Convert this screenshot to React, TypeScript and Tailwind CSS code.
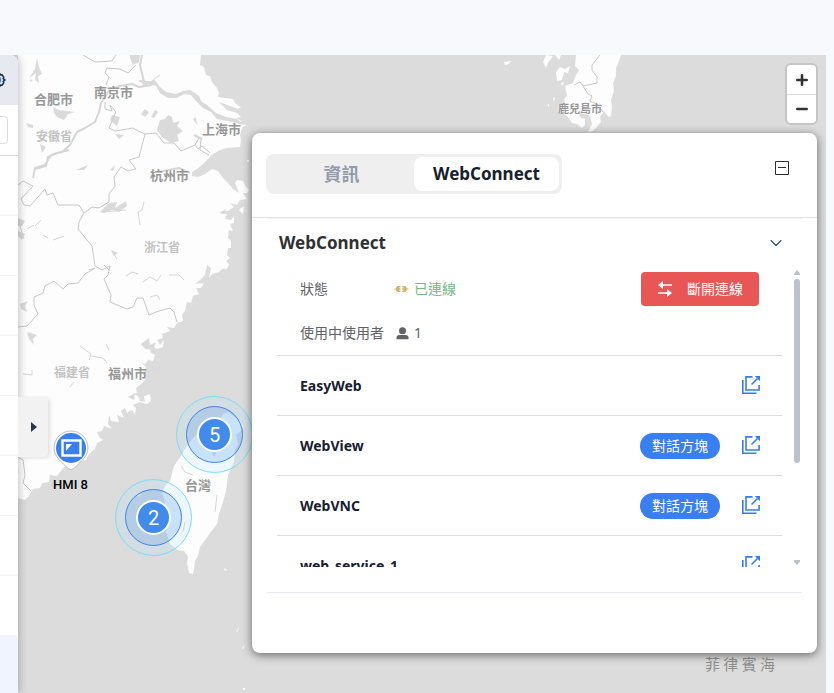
import React from 'react';
import { ChevronDown } from 'lucide-react';

interface Service {
  id: string;
  name: string;
  dialog: boolean;
}

interface Place {
  name: string;
  className: string;
}

const services: Service[] = [
  { id: 'easyweb', name: 'EasyWeb', dialog: false },
  { id: 'webview', name: 'WebView', dialog: true },
  { id: 'webvnc', name: 'WebVNC', dialog: true },
  { id: 'service-1', name: 'web_service_1', dialog: false },
];

const cityStyle = 'text-[13px] font-bold text-[#989898]';
const provinceStyle = 'text-[12px] font-bold text-[#c2c2c2]';

const places: Place[] = [
  { name: '合肥市', className: `left-[16px] top-[34px] ${cityStyle}` },
  { name: '南京市', className: `left-[76px] top-[27px] ${cityStyle}` },
  { name: '上海市', className: `left-[184px] top-[64px] ${cityStyle}` },
  { name: '杭州市', className: `left-[132px] top-[110px] ${cityStyle}` },
  { name: '福州市', className: `left-[90px] top-[308px] ${cityStyle}` },
  { name: '安徽省', className: `left-[18px] top-[71px] ${provinceStyle}` },
  { name: '浙江省', className: `left-[126px] top-[182px] ${provinceStyle}` },
  { name: '福建省', className: `left-[36px] top-[307px] ${provinceStyle}` },
  { name: '台灣', className: `left-[167px] top-[420px] ${cityStyle}` },
  { name: '鹿兒島市', className: 'left-[540px] top-[43px] text-[11px] font-bold text-[#989898]' },
];

const BaseMap: React.FC = () => (
  <svg
    className="absolute inset-0 h-full w-full"
    viewBox="18 55 808 638"
    preserveAspectRatio="xMinYMin slice"
    aria-hidden="true"
  >
    {/* land */}
    <g fill="#fdfdfe">
      <path d="M18 55H201L200 65L204 67L206 75L210 76L212 82L217 88L219 93L218 97L226 98L233 99L236 104L241 107L238 109L230 106L219 102L227 110L237 113L241 117L236 118L242 121L240 123L246 125L242 128L240 135L241 140L240 147L227 148L220 150L213 154L207 160L202 165L197 169L192 172L192 176L198 177L205 174L212 169L218 171L223 178L229 184L233 189L239 193L235 183L237 180L243 181L246 187L249 190L247 193L243 193L247 199L240 200L237 205L230 203L234 207L228 211L222 211L221 214L227 214L225 219L231 220L234 216L234 223L230 224L233 231L229 230L228 238L231 241L231 248L228 248L227 255L230 258L226 261L229 264L227 269L222 269L219 272L212 274L209 278L211 268L207 265L205 275L200 280L195 284L204 283L201 288L196 288L199 294L193 296L191 303L187 302L185 311L182 315L183 321L177 323L174 328L167 327L170 331L162 334L163 338L157 340L160 345L164 340L163 347L157 349L152 346L150 352L155 355L153 361L148 360L145 364L141 362L146 367L143 373L145 380L140 385L136 388L137 393L133 394L138 396L140 401L145 402L144 396L150 394L151 401L147 404L140 402L133 405L136 408L135 415L132 410L127 413L125 408L121 411L124 418L117 415L119 422L111 421L109 415L108 424L112 429L104 426L102 431L97 432L100 438L103 440L97 443L95 449L89 454L86 460L79 461L74 466L64 467L57 476L50 475L49 482L42 483L40 488L33 489L29 496L25 500L18 498Z" />
      <path d="M205 426L214 418L220 419L223 414L228 412L233 416L240 421L243 426L241 431L236 435L238 444L235 450L234 462L228 475L226 491L223 502L219 514L217 524L210 533L206 539L200 547L198 556L195 561L194 570L193 574L189 573L187 563L188 557L184 551L178 550L170 544L166 532L167 523L164 513L165 502L162 493L165 486L170 481L174 466L181 456L188 444L196 435Z" />
      <path d="M576 55L575 66L579 70L576 75L573 83L565 86L567 96L564 99L566 108L563 113L568 117L572 123L577 124L582 128L585 125L585 119L580 117L578 112L585 114L590 116L592 124L588 132L593 131L601 122L600 117L604 111L609 117L611 116L612 107L611 100L614 91L613 83L616 76L616 68L619 61L621 55Z" />
      <path d="M556 72L560 67L565 69L570 66L568 73L564 72L562 80L557 81ZM546 55L553 56L548 63L546 68L543 62ZM555 55L561 55L559 60ZM504 62L511 61L509 64L505 65ZM561 83L564 82L562 86ZM553 98L555 97L554 102ZM547 105L549 104L549 107ZM241 208L244 207L243 214L239 210ZM224 234L227 231L226 235ZM236 632L239 627L238 631ZM242 648L245 645L243 649ZM224 568L227 570L225 571ZM243 688H245V690H243ZM137 495L142 494L139 497ZM247 160H249V162H247ZM240 187L244 186L246 189L242 190Z" />
    </g>

    {/* lakes and rivers */}
    <g fill="#dadada">
      <path d="M142 82L148 83L154 79L160 87L166 92L176 94L183 91L190 90L199 96L201 101L208 106L216 113L226 117L237 119L245 125L239 124L227 121L217 119L211 112L203 108L197 102L191 95L184 94L177 98L168 98L160 93L156 86L149 84L143 86Z" />
      <path d="M160 120L165 119L168 115L172 117L173 123L180 121L177 126L183 131L177 135L179 141L171 143L162 137L157 130Z" />
      <path d="M53 107L59 110L66 111L75 112L68 114L64 120L57 117L54 113ZM37 58L39 67L42 74L38 76L39 83L35 80L36 73L29 78L35 69ZM30 79L33 80L30 82ZM145 109L149 112L145 117L141 114ZM155 110L158 112L154 118L151 117ZM130 58V55H140L139 62L133 65ZM112 115L120 117L117 126L110 120ZM115 134L124 135L119 139ZM26 123L33 125L33 128L28 127ZM40 144L46 147L42 153ZM193 119L196 117L197 125ZM18 218L25 221L22 226L18 226ZM18 231L25 234L22 240L18 236ZM100 212L109 203L117 202L115 208L126 201L127 206L119 212L112 210L103 213ZM76 170L88 165L84 170ZM110 170L115 165L113 171ZM111 250L118 253L114 256ZM20 304L28 301L25 306L27 312L21 309ZM27 332L37 335L33 339L34 345L29 339ZM151 365L160 367L158 373L151 371ZM212 454L218 442L215 457Z" />
      <path d="M141 344L149 338L150 345L156 342L153 350L145 349ZM128 397L135 393L134 400ZM219 213L226 209L224 213Z" />
    </g>
    <g fill="none" stroke="#d6d6d6" strokeWidth="2" strokeLinejoin="round">
      <path d="M142 55L140 65L144 82M152 85L139 87L132 84L120 86L109 90L105 97L101 103L99 112L95 122L85 128L77 132L70 145L62 152L51 155L45 165L35 168L33 178M69 150L57 153L48 157L46 166L35 169" />
      <path d="M139 81L154 83M194 135L202 139M158 172L179 168L190 173" />
      <path
        d="M144 202L142 210L138 212L140 225M126 210L103 212M34 225L27 229M35 226L41 220M19 222L24 239M43 235L48 238M53 240L64 236M112 251L117 259M126 276L132 272L138 274M143 282L150 277L157 281L161 275M169 275L179 275L184 280M150 297L157 295L160 300M80 346L91 354L89 360M91 356L103 358L107 363M106 344L109 350M23 374L32 375L32 370M70 387L74 382M181 466L185 472L193 475M185 522L183 532M217 495L215 512M154 79L160 75"
        strokeWidth="1"
      />
    </g>

    {/* borders */}
    <g fill="none" stroke="#c8c8c8" strokeWidth="1" strokeLinejoin="round">
      <path d="M83 55L95 62L112 61L116 55M106 85L109 77L105 73L107 68L120 69L128 73L136 65M105 102L105 109L112 111L110 105L116 112L112 121L109 128L115 131L133 128L138 131L145 134L156 133M145 134L139 157L129 160L136 169L128 171L121 167L114 177L115 186L109 194L109 202L99 208L92 207L84 213L79 205L58 205L53 193L47 195L45 189L38 197L30 206L24 205L21 199L33 186L23 181L18 185" />
      <path d="M84 213L79 222L78 229L92 246L95 266L102 270L110 266L108 275L104 279L111 295L110 302L127 309L133 307L137 298L143 298L149 315L156 312L170 308L174 312L177 322M95 268L85 274L78 283L68 284L63 289L54 281L45 286L43 293L34 297L34 305L38 314L27 326L18 327M95 268L89 270M104 265L109 270" />
      <path d="M156 133L164 143L174 143L181 151L195 145L198 149L202 146L210 153M195 145L199 138M201 139L200 150L209 155M18 457L23 460L25 475L23 483L31 491" />
      <path d="M600 55L592 65L592 70L597 77L597 83L583 86L580 82L574 85M583 86L588 94L592 96L590 101L598 105L603 112" />
    </g>
  </svg>
);

const GearIcon: React.FC = () => (
  <svg className="h-4 w-4 shrink-0" viewBox="0 0 16 16" fill="none">
    <path
      d="M6.500 1H9.500L10.200 3L12.200 2.800L13.800 5.300L13.200 6.600L15 8L13.200 9.400L13.800 10.700L12.200 13.200L10.200 13L9.500 15H6.500L5.800 13L3.800 13.200L2.200 10.700L2.800 9.400L1 8L2.800 6.600L2.200 5.300L3.800 2.800L5.800 3Z"
      stroke="#1c2638"
      strokeWidth="1.500"
      strokeLinejoin="round"
    />
    <circle cx="8" cy="8" r="2.600" stroke="#2f8fe8" strokeWidth="1.500" />
  </svg>
);

const OpenIcon: React.FC = () => (
  <svg className="h-[18px] w-[18px]" viewBox="0 0 18 18" fill="none" stroke="#347dee" strokeWidth="1.6">
    <path d="M0.800 4V17.200H14.500" />
    <path d="M10.500 0.900H4V14H17.100V9" />
    <path d="M9.500 8.500L15.500 2.500" />
    <path d="M12.800 0H18V5.200Z" fill="#347dee" stroke="none" />
  </svg>
);

const ClusterMarker: React.FC<{ count: number; className: string }> = ({ count, className }) => (
  <button
    className={`absolute flex h-[77px] w-[77px] items-center justify-center rounded-full border border-[#7adcf8] bg-[#afe6ff]/20 ${className}`}
  >
    <span className="flex h-[57px] w-[57px] items-center justify-center rounded-full border border-[#3f84ea] bg-[#3c8cf0]/20">
      <span className="flex h-[35px] w-[35px] items-center justify-center rounded-full border-2 border-white bg-[#418bec] font-['Roboto',sans-serif] text-[20px] leading-5 text-white">
        {count}
      </span>
    </span>
  </button>
);

const HmiMarker: React.FC = () => (
  <button className="absolute left-[32px] top-[374px] flex w-[41px] flex-col items-center">
    <svg className="h-[42px] w-10" viewBox="0 0 40 42">
      <path
        d="M20 2A17 17 0 0 1 37 19C37 28 29 33 23 39.500Q20 42 17 39.500C11 33 3 28 3 19A17 17 0 0 1 20 2Z"
        fill="#fff"
        stroke="#bdbdbd"
        strokeWidth="1"
      />
      <circle cx="20" cy="19" r="15" fill="#387ef4" />
      <path d="M11.500 11.500H29.500V26.500H11.500Z" fill="none" stroke="#fff" strokeWidth="2.400" />
      <path d="M15 15H21L15 22Z" fill="#fff" />
    </svg>
    <span className="mt-[6px] whitespace-nowrap font-['Roboto',sans-serif] text-[13px] font-medium leading-4 text-black">
      HMI 8
    </span>
  </button>
);

const Sidebar: React.FC = () => (
  <aside className="relative z-10 w-[18px] shrink-0 rounded-tr-lg bg-white shadow-[1px_0_8px_rgba(0,0,0,0.25)]">
    <div className="flex h-full flex-col overflow-hidden rounded-tr-lg">
      <div className="flex h-[50px] shrink-0 items-center justify-end bg-[#e6eaf0] pr-3">
        <GearIcon />
      </div>
      <div className="flex h-[51px] shrink-0 items-center justify-end border-b border-[#d4d6da] pr-[10px]">
        <input aria-label="搜尋" className="h-7 w-40 shrink-0 rounded border border-[#d9dce1] bg-white" />
      </div>
      {[1, 2, 3, 4, 5, 6, 7, 8].map((row) => (
        <div key={row} className="mr-px h-[60px] shrink-0 border-b border-[#f2f2f4]" />
      ))}
      <div className="flex-1 rounded-tr bg-[#eff4ff]" />
    </div>
    <button
      aria-label="展開"
      className="absolute left-full top-[342px] flex h-[60px] w-[30px] items-center justify-center rounded-r-sm bg-[#f2f2f2] pl-[2px] shadow-[2px_1px_4px_rgba(0,0,0,0.12)]"
    >
      <svg className="h-[10px] w-[6px]" viewBox="0 0 6 10">
        <path d="M0 0L6 5L0 10Z" fill="#26384c" />
      </svg>
    </button>
  </aside>
);

const ZoomControl: React.FC = () => (
  <div className="absolute right-[8px] top-[8px] flex flex-col rounded-md border-2 border-black/10 bg-white bg-clip-padding">
    <button aria-label="放大" className="flex h-[30px] w-[29px] items-center justify-center border-b border-[#d9d9d9]">
      <svg className="h-3 w-3" viewBox="0 0 12 12" stroke="#333" strokeWidth="2.600" strokeLinecap="round">
        <path d="M6 1.300V10.700M1.300 6H10.700" />
      </svg>
    </button>
    <button aria-label="縮小" className="flex h-[28px] w-[29px] items-center justify-center">
      <svg className="h-3 w-3" viewBox="0 0 12 12" stroke="#333" strokeWidth="2.600" strokeLinecap="round">
        <path d="M1.300 6H10.700" />
      </svg>
    </button>
  </div>
);

const ServiceRow: React.FC<{ service: Service }> = ({ service }) => (
  <li className="flex h-[60px] items-center border-b border-[#dcdee0] pl-[23px] pr-[22px]">
    <span className="flex-1 text-[14px] font-bold text-[#17202e]">{service.name}</span>
    {service.dialog && (
      <button className="mr-[22px] h-[26px] w-20 rounded-full bg-[#387ef4] text-[14px] leading-[26px] text-white">
        對話方塊
      </button>
    )}
    <a href="#" aria-label={`開啟 ${service.name}`} className="flex h-5">
      <OpenIcon />
    </a>
  </li>
);

const ConnectPanel: React.FC = () => (
  <section className="absolute right-[9px] top-[78px] w-[565px] rounded-lg bg-white pb-[60px] shadow-[0_2px_10px_rgba(0,0,0,0.55)]">
    <div className="flex h-[85px] items-start justify-between border-b border-[#e0e2e8] px-[14px] pt-[21px]">
      <div role="tablist" className="flex h-10 w-[296px] rounded-lg bg-[#efefef] p-[3px]">
        <button role="tab" className="flex-1 text-[18px] font-bold leading-[34px] text-[#929bab]">
          資訊
        </button>
        <button
          role="tab"
          aria-selected="true"
          className="w-[145px] rounded-lg bg-white text-[17px] font-bold leading-[34px] text-[#17202e]"
        >
          WebConnect
        </button>
      </div>
      <button aria-label="最小化" className="mr-[14px] mt-[7px]">
        <svg className="h-[14px] w-[14px]" viewBox="0 0 14 14" fill="none" stroke="#2b2b2b">
          <path d="M0.500 0.500H13.500V13.500H0.500ZM3 6.500H11" />
        </svg>
      </button>
    </div>

    <div className="mx-[15px] border-b border-t border-[#ebebf4] border-t-[#f1f1f7] pb-[25px]">
      <div className="flex h-[47px] items-center justify-between pl-[12px] pr-[16px]">
        <h2 className="text-[17px] font-bold leading-7 text-[#303133]">WebConnect</h2>
        <ChevronDown className="h-5 w-5 text-[#2b4763]" strokeWidth={1.3} />
      </div>

      <div className="flex h-[301px] pl-[10px]">
        <div className="flex-1 overflow-hidden">
          <div className="flex h-[90px] border-b border-[#dcdee0] pl-[23px] pr-[23px] text-[14px] leading-[44px] text-[#606266]">
            <dl className="grid flex-1 grid-cols-[94px_1fr] content-start pt-px">
              <dt>狀態</dt>
              <dd className="flex items-center gap-[5px] text-[#72b985]">
                <svg className="h-[14px] w-[15px]" viewBox="0 0 15 14" fill="#cfb56d">
                  <path d="M0.500 6.500H2V5.500L3.500 4H6.500V5.300H5.300V6.200H6.500V7.800H5.300V8.700H6.500V10H3.500L2 8.500V7.500H0.500ZM8.200 4H11.200L12.800 5.500V6.500H14.500V7.500H12.800V8.500L11.200 10H8.200V8.700H9.400V7.800H8.200V6.200H9.400V5.300H8.200Z" />
                </svg>
                已連線
              </dd>
              <dt>使用中使用者</dt>
              <dd className="flex items-center gap-[5px]">
                <svg className="ml-[2px] h-[13px] w-[13px]" viewBox="0 0 13 13" fill="#606266">
                  <circle cx="6.500" cy="3.700" r="3.500" />
                  <path d="M0.500 12.300V10.500Q0.500 8 3.500 8H9.500Q12.500 8 12.500 10.500V12.300Z" />
                </svg>
                1
              </dd>
            </dl>
            <button className="mt-[6px] flex h-[34px] w-[118px] items-center justify-between rounded-sm bg-[#e85656] pl-[17px] pr-[16px] leading-[34px] text-white">
              <svg className="h-4 w-[14px]" viewBox="0 0 14 16" fill="#fff">
                <path d="M0 4L5 0V3.200H14V4.800H5V8ZM14 12L9 8V11.200H0V12.800H9V16Z" />
              </svg>
              斷開連線
            </button>
          </div>
          <ul>
            {services.map((service) => (
              <ServiceRow key={service.id} service={service} />
            ))}
          </ul>
        </div>

        {/* scrollbar */}
        <div className="ml-[12px] mr-[2px] flex w-[6px] flex-col justify-between pb-[2px] pt-[4px]">
          <svg className="h-[5px] w-[6px]" viewBox="0 0 6 5">
            <path d="M3 0L6 3.500V5H0V3.500Z" fill="#bcc2ca" />
          </svg>
          <div className="mb-auto mt-[4px] h-[184px] rounded-full bg-[#bcc2ca]" />
          <svg className="h-[5px] w-[6px]" viewBox="0 0 6 5">
            <path d="M3 5L6 1.500V0H0V1.500Z" fill="#bcc2ca" />
          </svg>
        </div>
      </div>
    </div>
  </section>
);

export default function App() {
  return (
    <div className="flex h-screen flex-col overflow-hidden bg-[#f7f9fc] font-['Noto_Sans','Noto_Sans_CJK_TC',sans-serif]">
      <header className="h-[55px] shrink-0" />
      <main className="mr-2 flex min-h-0 flex-1 overflow-hidden bg-[#dcdcdc]">
        <Sidebar />
        <div className="relative flex-1">
          <BaseMap />
          {places.map((place) => (
            <span
              key={place.name}
              className={`absolute whitespace-nowrap font-['Noto_Sans_CJK_TC',sans-serif] leading-5 [text-shadow:0_0_2px_#fff] ${place.className}`}
            >
              {place.name}
            </span>
          ))}
          <span className="absolute bottom-[19px] right-[51px] font-['Noto_Sans_CJK_TC',sans-serif] text-[15px] leading-5 text-[#8f8f8f]">
            菲 律 賓 海
          </span>
          <HmiMarker />
          <ClusterMarker count={5} className="left-[158px] top-[341px]" />
          <ClusterMarker count={2} className="left-[97px] top-[424px]" />
          <ZoomControl />
          <ConnectPanel />
        </div>
      </main>
    </div>
  );
}
